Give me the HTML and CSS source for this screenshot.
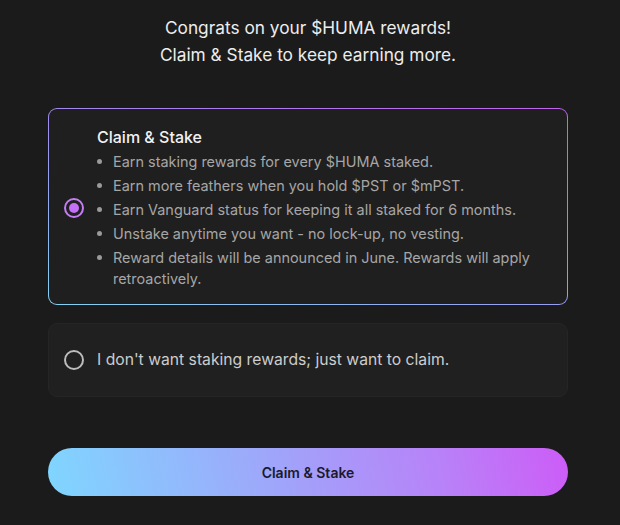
FILE: index.html
```html
<!DOCTYPE html>
<html lang="en">
<head>
<meta charset="utf-8">
<title>Claim & Stake</title>
<link rel="stylesheet" href="styles.css">
</head>
<body>
<main class="page">
  <h1 class="headline">Congrats on your $HUMA rewards!<br>Claim &amp; Stake to keep earning more.</h1>

  <div class="option option-selected">
    <span class="radio radio-on"><span class="radio-dot"></span></span>
    <div class="option-body">
      <div class="option-title">Claim &amp; Stake</div>
      <ul class="perks">
        <li>Earn staking rewards for every $HUMA staked.</li>
        <li>Earn more feathers when you hold $PST or $mPST.</li>
        <li>Earn Vanguard status for keeping it all staked for 6 months.</li>
        <li>Unstake anytime you want - no lock-up, no vesting.</li>
        <li>Reward details will be announced in June. Rewards will apply retroactively.</li>
      </ul>
    </div>
  </div>

  <div class="option option-plain">
    <span class="radio radio-off"></span>
    <div class="option-label">I don't want staking rewards; just want to claim.</div>
  </div>

  <button class="cta">Claim &amp; Stake</button>
</main>
</body>
</html>
```
FILE: styles.css
```css
html, body {
  margin: 0;
  padding: 0;
  background: #1b1b1b;
}
body {
  font-family: Inter, "Noto Sans", sans-serif;
  color: #ececec;
}
.page {
  width: 520px;
  padding: 14px 0 0 48px;
  display: flex;
  flex-direction: column;
}
.headline {
  margin: 0 0 40px;
  font-size: 17.3px;
  line-height: 27px;
  font-weight: 400;
  text-align: center;
  color: #ededed;
}
.option {
  display: flex;
  align-items: center;
  border-radius: 9px;
  box-sizing: border-box;
}
.option-selected {
  border: 1px solid transparent;
  background:
    linear-gradient(#1f1f1f, #1f1f1f) padding-box,
    linear-gradient(15deg, #84d2f2 0%, #9f8cf0 55%, #c262ee 100%) border-box;
  padding: 17px 16px 15px 15px;
}
.option-plain {
  margin-top: 18px;
  height: 74px;
  background: #202020;
  border: 1px solid #252525;
  padding: 0 16px 0 15px;
}
.radio {
  flex: none;
  width: 20px;
  height: 20px;
  box-sizing: border-box;
  border-radius: 50%;
  display: flex;
  align-items: center;
  justify-content: center;
  margin-right: 13px;
}
.radio-on {
  border: 2px solid #c57cf4;
}
.radio-dot {
  width: 10px;
  height: 10px;
  border-radius: 50%;
  background: #c46ff7;
}
.radio-off {
  border: 2px solid #bcbcbc;
}
.option-body {
  flex: 1;
}
.option-title {
  font-size: 16px;
  line-height: 22px;
  font-weight: 500;
  color: #f2f2f2;
}
.perks {
  list-style: none;
  margin: 0;
  padding: 0;
}
.perks li {
  position: relative;
  margin-top: 3px;
  padding-left: 16px;
  font-size: 14.45px;
  line-height: 21px;
  color: #a6a6a6;
}
.perks li::before {
  content: "";
  position: absolute;
  left: 0;
  top: 8px;
  width: 5px;
  height: 5px;
  border-radius: 50%;
  background: #9a9a9a;
}
.option-label {
  font-size: 15.7px;
  line-height: 22px;
  color: #cdcdcd;
}
.cta {
  margin-top: 51px;
  height: 48px;
  border: none;
  border-radius: 24px;
  background: linear-gradient(78deg, #7fd6ff 0%, #a0a4fa 45%, #b882f8 75%, #cd5cf7 100%);
  font-family: Inter, "Noto Sans", sans-serif;
  font-size: 14px;
  font-weight: 600;
  color: #1c1a2a;
  cursor: pointer;
}
```
